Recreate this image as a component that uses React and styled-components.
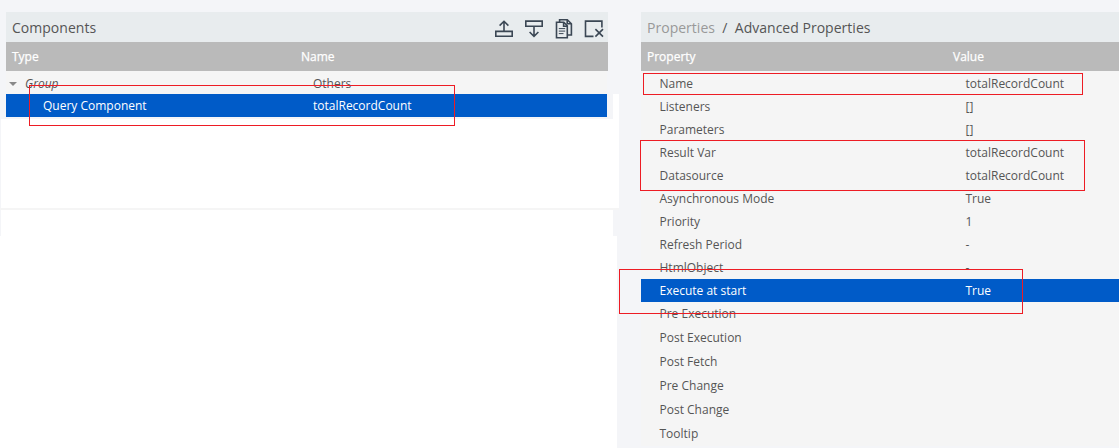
import React from "react";
import styled, { createGlobalStyle } from "styled-components";

const GlobalStyle = createGlobalStyle`
  * { box-sizing: border-box; }
  body {
    margin: 0;
    background: #f4f5f8;
    font-family: "Open Sans", "Noto Sans", sans-serif;
    color: #555;
    overflow: hidden;
  }
`;

const Page = styled.div`
  position: relative;
  display: flex;
  width: 1119px;
  height: 448px;
  overflow: hidden;
`;

const Column = styled.div`
  display: flex;
  flex-direction: column;
  flex: 0 0 ${(p) => p.$width}px;
  padding-top: 12px;
`;

const Panel = styled.section`
  display: flex;
  flex-direction: column;
  margin-left: ${(p) => p.$inset || 0}px;
`;

const TitleBar = styled.header`
  display: flex;
  align-items: center;
  justify-content: space-between;
  height: 30px;
  width: ${(p) => p.$width}px;
  padding: 2px 0 0 6px;
  background: #e8ecee;
  font-size: 14px;
  line-height: 20px;
  color: #555;
  white-space: pre;
`;

const Title = styled.span`
  letter-spacing: 0.02px;
`;

const Crumb = styled.span`
  color: #999;
`;

const Toolbar = styled.div`
  display: flex;
  gap: 8px;
  margin-right: 3px;
`;

const Icon = styled.svg`
  display: block;
  width: 22px;
  height: 22px;
  fill: none;
  stroke: #3b4754;
  stroke-width: 1.6;
`;

const Row = styled.div`
  display: grid;
  grid-template-columns: ${(p) => p.$split}px 1fr;
  align-items: center;
  flex: none;
  width: ${(p) => p.$width}px;
  height: ${(p) => p.$height || 23}px;
  padding-top: ${(p) => p.$drop || 0}px;
  font-size: 12px;
  line-height: 16px;
  white-space: nowrap;
  background: ${(p) => (p.$selected ? "#005bc8" : "#f5f5f5")};
  color: ${(p) => (p.$selected ? "#fff" : "#555")};
`;

const HeadRow = styled(Row)`
  height: 29px;
  background: #bababa;
  color: #fff;
  -webkit-text-stroke: 0.25px #fff;
`;

const Cell = styled.span`
  display: flex;
  align-items: center;
  padding-left: ${(p) => p.$indent || 0}px;
  font-style: ${(p) => (p.$italic ? "italic" : "normal")};
`;

const Caret = styled.span`
  width: 0;
  height: 0;
  margin-right: 8px;
  border: 4px solid transparent;
  border-top-color: #888;
  border-bottom: 0;
`;

const Rows = styled.div`
  padding-top: 1px;
  background: #f5f5f5;
`;

const SelectedLine = styled.div`
  display: flex;
  gap: 6px;
`;

const Strip = styled.div`
  width: 6px;
  height: 25px;
  background: #fff;
`;

const Blank = styled.div`
  flex: none;
  width: ${(p) => p.$width}px;
  height: ${(p) => p.$height}px;
  margin-left: ${(p) => p.$inset || 0}px;
  background: ${(p) => p.$tone || "#fff"};
`;

const Mark = styled.div`
  position: absolute;
  left: ${(p) => p.$x}px;
  top: ${(p) => p.$y}px;
  width: ${(p) => p.$w}px;
  height: ${(p) => p.$h}px;
  border: 1px solid #ed1c24;
  pointer-events: none;
`;

const properties = [
  ["Name", "totalRecordCount"],
  ["Listeners", "[]"],
  ["Parameters", "[]"],
  ["Result Var", "totalRecordCount"],
  ["Datasource", "totalRecordCount"],
  ["Asynchronous Mode", "True"],
  ["Priority", "1"],
  ["Refresh Period", "-"],
  ["HtmlObject", "-"],
  ["Execute at start", "True"],
  ["Pre Execution", ""],
  ["Post Execution", ""],
  ["Post Fetch", ""],
  ["Pre Change", ""],
  ["Post Change", ""],
  ["Tooltip", ""],
];

const marks = [
  [29, 85, 426, 41],
  [643, 73, 440, 22],
  [640, 140, 445, 51],
  [619, 269, 404, 45],
];

export default function App() {
  return (
    <Page>
      <GlobalStyle />
      <Column $width={641}>
        <Panel $inset={6}>
          <TitleBar $width={602}>
            <Title>Components</Title>
            <Toolbar>
              <Icon viewBox="0 -0.6 22 22">
                <path d="M2.8 13.8H19.2V18.7H2.8ZM11 13.5V4M6.6 8L11 3.7L15.4 8" />
              </Icon>
              <Icon viewBox="0 -0.6 22 22">
                <path d="M2.8 3.5H19.2V8.6H2.8ZM11 9V18.6M6.6 14.4L11 18.7L15.4 14.4" />
              </Icon>
              <Icon viewBox="0 -0.6 22 22">
                <path d="M3.5 4.7H10.8L14.3 8.2V20.2H3.5ZM10.6 5V8.6H14.3" />
                <path d="M6.6 4.7V2.2H14.3L18.4 6.2V17.4H14.5M14.2 2.5V6.2H18.2" />
                <path d="M5.8 11H12.2M5.8 13.5H12.2M5.8 16H10.5" strokeWidth="1" />
              </Icon>
              <Icon viewBox="0 -0.6 22 22">
                <path d="M10.5 18.8H2.5V3.5H18.9V10M12.4 11.5L20 19M20 11.5L12.4 19" />
              </Icon>
            </Toolbar>
          </TitleBar>
          <HeadRow $width={602} $split={289}>
            <Cell $indent={6}>Type</Cell>
            <Cell $indent={6}>Name</Cell>
          </HeadRow>
          <Row $width={601} $split={301} $drop={2}>
            <Cell $indent={3} $italic>
              <Caret />
              Group
            </Cell>
            <Cell $indent={6}>Others</Cell>
          </Row>
          <SelectedLine>
            <Row $width={601} $split={301} $selected>
              <Cell $indent={37}>Query Component</Cell>
              <Cell $indent={6}>totalRecordCount</Cell>
            </Row>
            <Strip />
          </SelectedLine>
        </Panel>
        <Blank $inset={1} $width={618} $height={89} />
        <Blank $width={619} $height={2} $tone="#f5f5f5" />
        <Blank $inset={1} $width={612} $height={26} />
        <Blank $width={617} $height={212} />
      </Column>
      <Column $width={478}>
        <Panel>
          <TitleBar $width={478}>
            <Title>
              <Crumb>Properties</Crumb>
              {"  /  Advanced Properties"}
            </Title>
          </TitleBar>
          <HeadRow $width={478} $split={306}>
            <Cell $indent={6}>Property</Cell>
            <Cell $indent={6}>Value</Cell>
          </HeadRow>
          <Rows>
            {properties.map(([name, value], i) => (
              <Row
                key={name}
                $width={478}
                $split={306}
                $height={i > 9 ? 24 : 23}
                $selected={i === 9}
              >
                <Cell $indent={18.5}>{name}</Cell>
                <Cell $indent={18.5}>{value}</Cell>
              </Row>
            ))}
          </Rows>
        </Panel>
      </Column>
      {marks.map(([x, y, w, h]) => (
        <Mark key={y} $x={x} $y={y} $w={w} $h={h} />
      ))}
    </Page>
  );
}
